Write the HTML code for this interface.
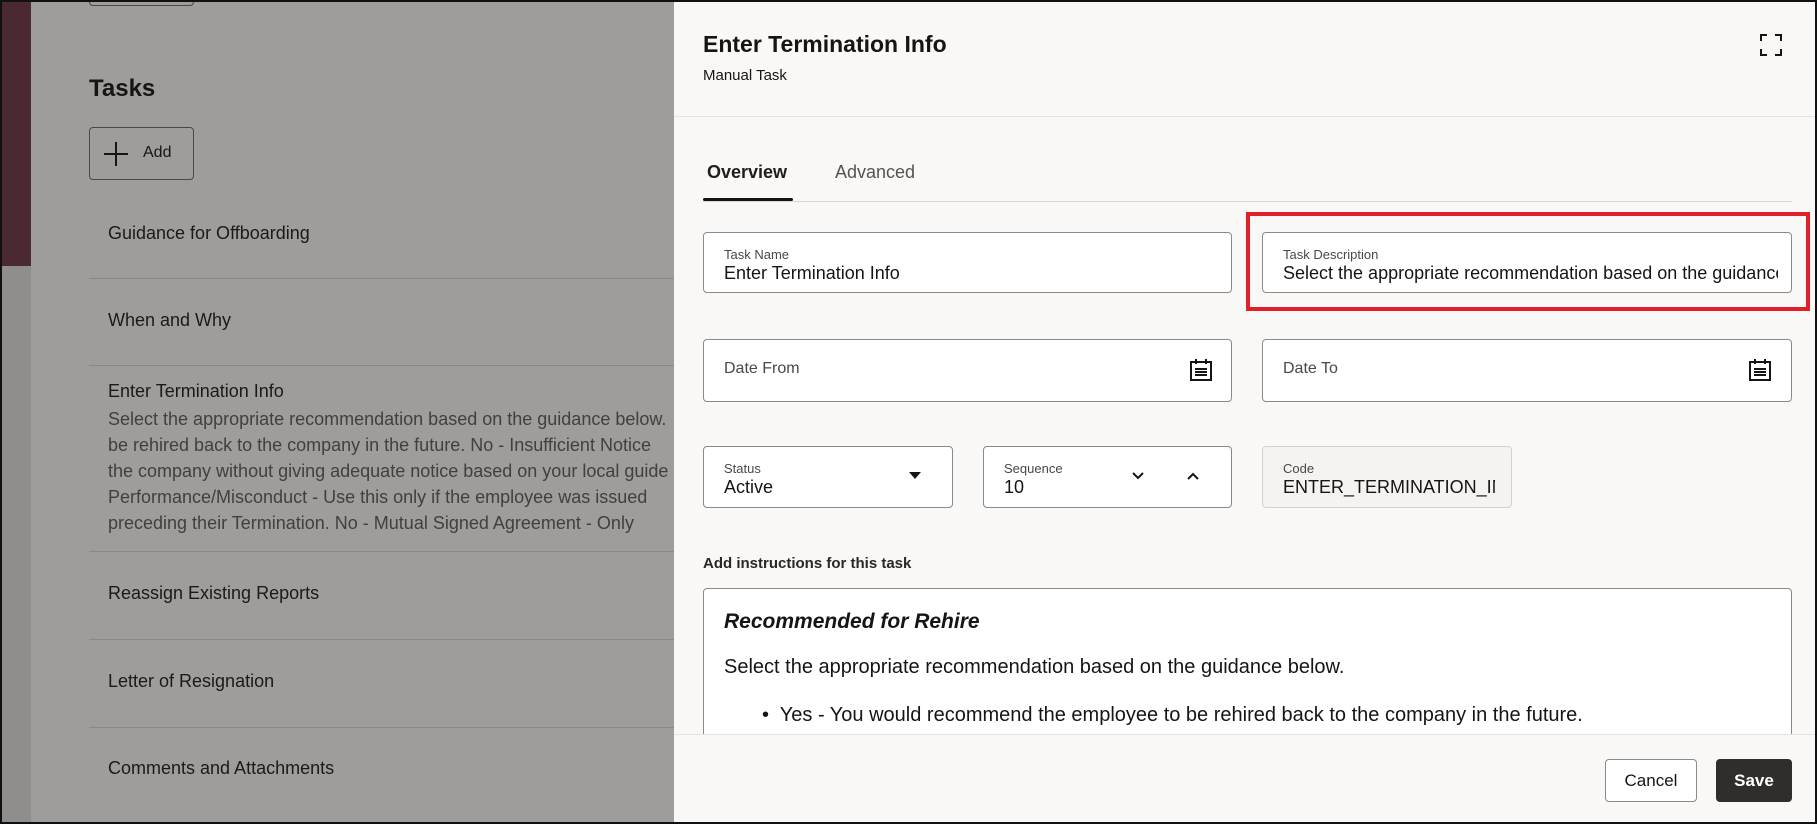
<!DOCTYPE html>
<html><head><meta charset="utf-8"><style>
*{box-sizing:border-box;margin:0;padding:0}
body{width:1817px;height:824px;overflow:hidden;position:relative;font-family:"Liberation Sans",sans-serif;background:#9e9d9b;color:#161513}
.a{position:absolute}
.frame{position:absolute;left:0;top:0;width:1817px;height:824px;border:2px solid #111;z-index:10;pointer-events:none}
.ltxt{position:absolute;left:108px;font-size:18px;color:#1c1a18;white-space:nowrap}
.div{position:absolute;left:89px;width:585px;height:1px;background:#8a8987}
.panel{position:absolute;left:674px;top:0;width:1143px;height:824px;background:#f9f8f6}
.fld{position:absolute;background:#fff;border:1px solid #8c8a88;border-radius:4px}
.lbl{position:absolute;left:20px;top:14px;font-size:13px;color:#4a4846}
.val{position:absolute;left:20px;top:30px;font-size:18px;color:#161513;white-space:nowrap;overflow:hidden}
</style></head><body>
<div class="a" style="left:0;top:0;width:31px;height:266px;background:#4a2a30"></div>
<div class="a" style="left:0;top:266px;width:31px;height:558px;background:#8f8e8c"></div>
<div class="a" style="left:89px;top:-8px;width:105px;height:14px;border:1px solid #4a4846;border-radius:4px"></div>
<div class="a" style="left:89px;top:75px;font-size:24px;font-weight:bold;color:#161513">Tasks</div>
<div class="a" style="left:89px;top:127px;width:105px;height:53px;border:1px solid #4a4846;border-radius:4px"></div>
<div class="a" style="left:104px;top:153px;width:24px;height:2px;background:#161513"></div>
<div class="a" style="left:115px;top:142px;width:2px;height:24px;background:#161513"></div>
<div class="a" style="left:143px;top:144px;font-size:16px">Add</div>
<div class="ltxt" style="top:223px">Guidance for Offboarding</div>
<div class="div" style="top:278px"></div>
<div class="ltxt" style="top:310px">When and Why</div>
<div class="div" style="top:365px"></div>
<div class="ltxt" style="top:381px">Enter Termination Info</div>
<div class="a" style="left:108px;top:406px;width:560px;overflow:hidden;font-size:18px;line-height:26px;color:#42403e;white-space:nowrap">Select the appropriate recommendation based on the guidance below. Yes<br>be rehired back to the company in the future. No - Insufficient Notice<br>the company without giving adequate notice based on your local guidelines<br>Performance/Misconduct - Use this only if the employee was issued<br>preceding their Termination. No - Mutual Signed Agreement - Only</div>
<div class="div" style="top:551px"></div>
<div class="ltxt" style="top:583px">Reassign Existing Reports</div>
<div class="div" style="top:639px"></div>
<div class="ltxt" style="top:671px">Letter of Resignation</div>
<div class="div" style="top:727px"></div>
<div class="ltxt" style="top:758px">Comments and Attachments</div>

<div class="panel">
 <div class="a" style="left:29px;top:31px;font-size:23px;font-weight:bold">Enter Termination Info</div>
 <div class="a" style="left:29px;top:67px;font-size:15px">Manual Task</div>
 <svg class="a" style="left:1086px;top:34px" width="22" height="22" viewBox="0 0 22 22" fill="none" stroke="#161513" stroke-width="2"><path d="M1 7V1h6M15 1h6v6M21 15v6h-6M7 21H1v-6"/></svg>
 <div class="a" style="left:0;top:116px;width:1143px;height:1px;background:#e6e4e1"></div>
 <div class="a" style="left:33px;top:162px;font-size:18px;font-weight:bold;color:#201e1c">Overview</div>
 <div class="a" style="left:161px;top:162px;font-size:18px;color:#55534f">Advanced</div>
 <div class="a" style="left:29px;top:201px;width:1089px;height:1px;background:#d8d6d3"></div>
 <div class="a" style="left:29px;top:198px;width:90px;height:3px;background:#161513;border-radius:2px"></div>

 <div class="a" style="left:572px;top:212px;width:564px;height:99px;border:4px solid #e0202a"></div>
 <div class="fld" style="left:29px;top:232px;width:529px;height:61px"><div class="lbl">Task Name</div><div class="val">Enter Termination Info</div></div>
 <div class="fld" style="left:588px;top:232px;width:530px;height:61px"><div class="lbl">Task Description</div><div class="val" style="width:495px">Select the appropriate recommendation based on the guidance below.</div></div>

 <div class="fld" style="left:29px;top:339px;width:529px;height:63px"><div class="lbl" style="top:20px;font-size:16px">Date From</div></div>
 <div class="fld" style="left:588px;top:339px;width:530px;height:63px"><div class="lbl" style="top:20px;font-size:16px">Date To</div></div>
 <svg class="a" style="left:516px;top:359px" width="22" height="22" viewBox="0 0 22 22"><rect x="1" y="3" width="20" height="18" fill="none" stroke="#161513" stroke-width="2"/><path d="M6 0v5M16 0v5" stroke="#161513" stroke-width="2"/><g fill="#161513"><rect x="5" y="9" width="12" height="2"/><rect x="5" y="12" width="12" height="2"/><rect x="5" y="15" width="12" height="2"/></g></svg>
 <svg class="a" style="left:1075px;top:359px" width="22" height="22" viewBox="0 0 22 22"><rect x="1" y="3" width="20" height="18" fill="none" stroke="#161513" stroke-width="2"/><path d="M6 0v5M16 0v5" stroke="#161513" stroke-width="2"/><g fill="#161513"><rect x="5" y="9" width="12" height="2"/><rect x="5" y="12" width="12" height="2"/><rect x="5" y="15" width="12" height="2"/></g></svg>

 <div class="fld" style="left:29px;top:446px;width:250px;height:62px"><div class="lbl">Status</div><div class="val">Active</div></div>
 <svg class="a" style="left:235px;top:472px" width="12" height="8"><path d="M0 0h12L6 7z" fill="#161513"/></svg>
 <div class="fld" style="left:309px;top:446px;width:249px;height:62px"><div class="lbl">Sequence</div><div class="val">10</div></div>
 <svg class="a" style="left:457px;top:471px" width="14" height="10" fill="none" stroke="#161513" stroke-width="2"><path d="M2 2l5 5 5-5"/></svg>
 <svg class="a" style="left:512px;top:471px" width="14" height="10" fill="none" stroke="#161513" stroke-width="2"><path d="M2 8l5-5 5 5"/></svg>
 <div class="fld" style="left:588px;top:446px;width:250px;height:62px;background:#f4f3f1;border-color:#d3d1ce"><div class="lbl">Code</div><div class="val" style="width:212px">ENTER_TERMINATION_INFO</div></div>

 <div class="a" style="left:29px;top:555px;font-size:15px;font-weight:bold;color:#2a2826">Add instructions for this task</div>
 <div class="a" style="left:29px;top:588px;width:1089px;height:160px;background:#fff;border:1px solid #8c8a88;border-radius:4px;overflow:hidden">
  <div class="a" style="left:20px;top:21px;font-size:21px;font-weight:bold;font-style:italic">Recommended for Rehire</div>
  <div class="a" style="left:20px;top:67px;font-size:20px;white-space:nowrap">Select the appropriate recommendation based on the guidance below.</div>
  <div class="a" style="left:58px;top:115px;font-size:20px;white-space:nowrap">•&nbsp; Yes - You would recommend the employee to be rehired back to the company in the future.</div>
 </div>
 <div class="a" style="left:0;top:734px;width:1143px;height:90px;background:#f9f8f6;border-top:1px solid #e6e4e1"></div>
 <div class="a" style="left:931px;top:759px;width:92px;height:43px;border:1px solid #8c8a88;border-radius:4px;background:#fff;font-size:17px;text-align:center;line-height:41px">Cancel</div>
 <div class="a" style="left:1042px;top:759px;width:76px;height:43px;border-radius:4px;background:#312d2a;color:#fff;font-weight:bold;font-size:17px;text-align:center;line-height:43px">Save</div>
</div>
<div class="frame"></div>
</body></html>
